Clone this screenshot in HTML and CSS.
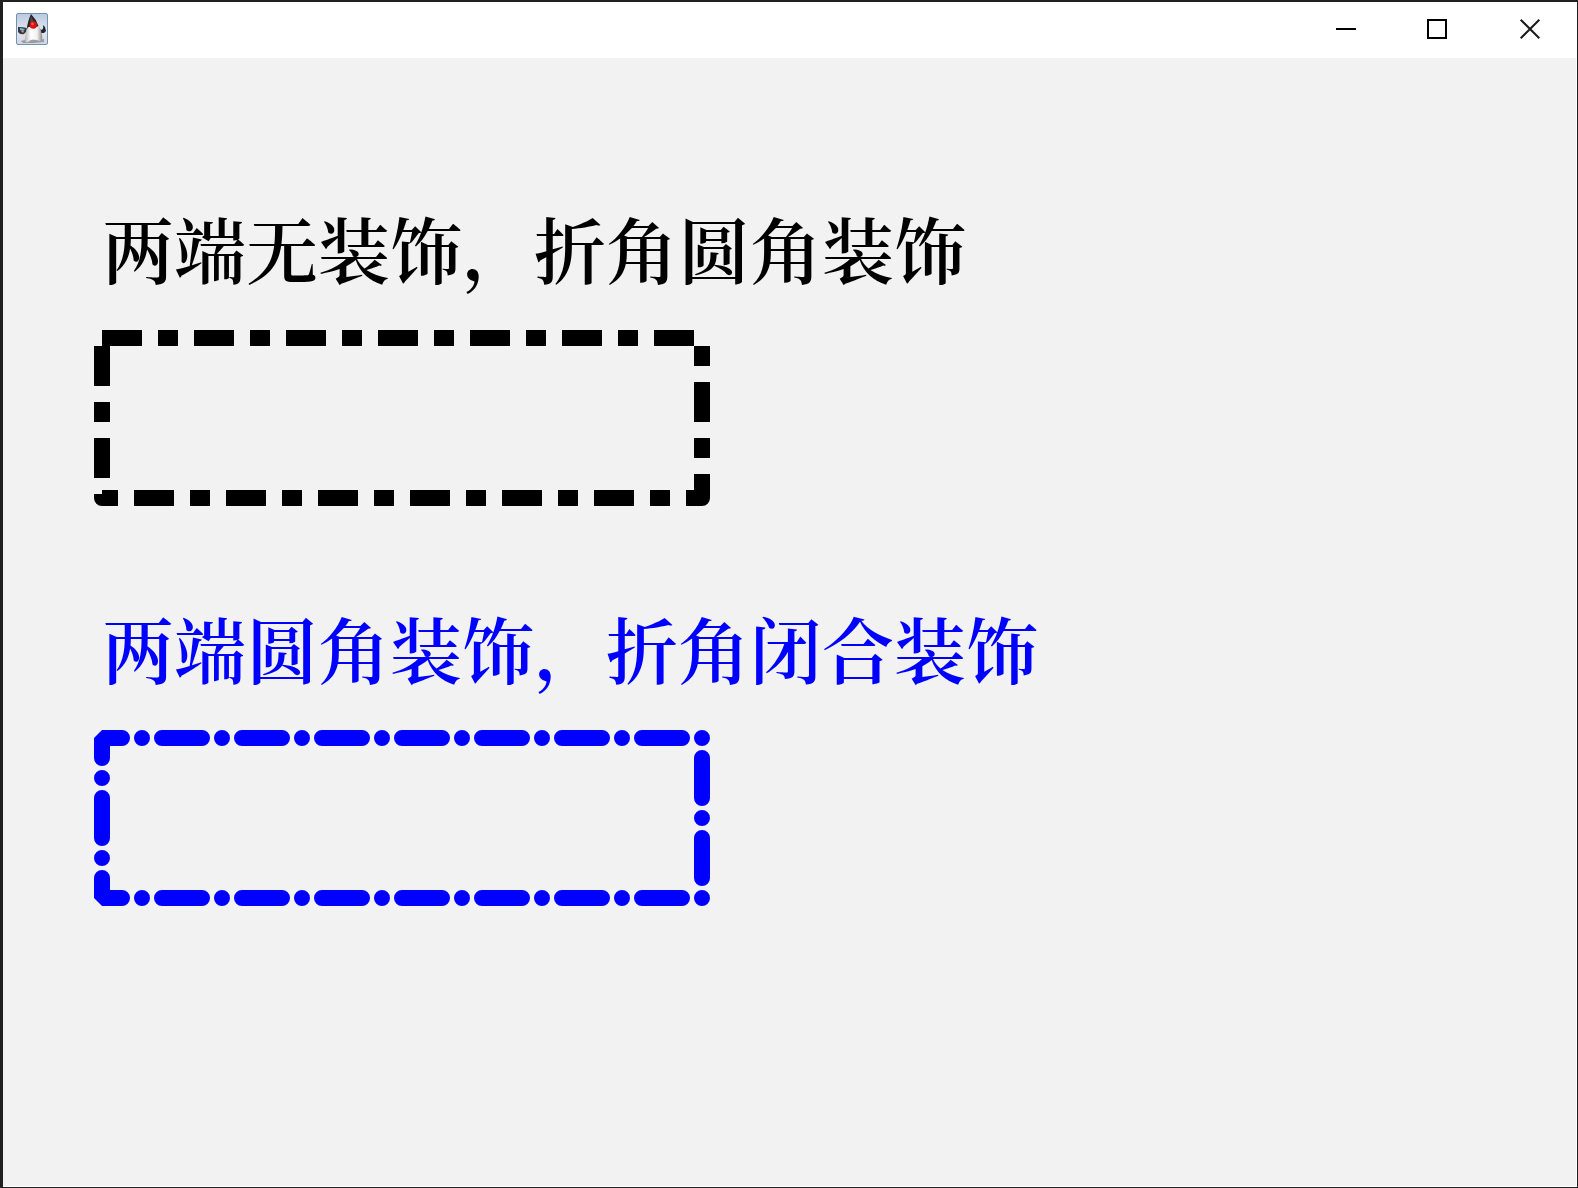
FILE: index.html
```html
<!DOCTYPE html>
<html lang="zh-CN">
<head>
<meta charset="utf-8">
<title>Stroke</title>
<link rel="stylesheet" href="styles.css">
</head>
<body>
<div class="window">
  <header class="titlebar">
    <svg class="app-icon" viewBox="0 0 32 32" aria-hidden="true">
      <defs>
        <linearGradient id="tile" x1="0" y1="0" x2="0" y2="1">
          <stop offset="0" stop-color="#b9c9dd"/>
          <stop offset=".55" stop-color="#e3e6ee"/>
          <stop offset="1" stop-color="#d3d6df"/>
        </linearGradient>
        <linearGradient id="belly" x1="0" y1="0" x2="1" y2="0">
          <stop offset="0" stop-color="#b5b5b5"/>
          <stop offset=".35" stop-color="#ffffff"/>
          <stop offset=".7" stop-color="#f2f2f2"/>
          <stop offset="1" stop-color="#8c8c8c"/>
        </linearGradient>
      </defs>
      <rect x=".5" y=".5" width="31" height="31" rx="1.5" fill="url(#tile)" stroke="#6f94b0"/>
      <path d="M5 28Q12 25 19 27L28 26V29L18 30H7Z" fill="#6f737b" opacity=".6"/>
      <path d="M11 15Q7 14 2 14V19Q4 22 8 21L11 18Z" fill="#35383d"/>
      <path d="M4 15L9 16L7 18L4 17Z" fill="#77b6ec"/>
      <path d="M5 18L8 18L7 20Z" fill="#d79a57"/>
      <path d="M24 16L26 17Q28 15 27 12L29 14L30 18L28 20L25 20Z" fill="#202225"/>
      <path d="M11 13L23 13Q27 21 26 27Q24 29 21 27Q16 25 12 29Q8 30 9 25Z" fill="url(#belly)"/>
      <path d="M15 1Q20 6 22.500 13Q18 16 14 14Q12 13 10.500 17Q12 7 15 1Z" fill="#242424"/>
      <path d="M15 3Q17 7 18 9L14 11Q14 6 15 3Z" fill="#484848"/>
      <circle cx="17.3" cy="12" r="3.7" fill="#dc1111"/>
      <circle cx="16.5" cy="11" r="1.4" fill="#ff5448"/>
    </svg>
    <div class="controls">
      <button class="control" type="button" aria-label="最小化">
        <svg class="glyph" viewBox="0 0 20 20"><path d="M0 10H20"/></svg>
      </button>
      <button class="control" type="button" aria-label="最大化">
        <svg class="glyph" viewBox="0 0 20 20"><path d="M0 1H18V19H0Z"/></svg>
      </button>
      <button class="control" type="button" aria-label="关闭">
        <svg class="glyph glyph-close" viewBox="0 0 20 20"><path d="M.7 .7L19.3 19.3M19.3 .7L.7 19.3"/></svg>
      </button>
    </div>
  </header>
  <main class="canvas">
    <section class="sample sample-butt">
      <h2 class="caption">两端无装饰，折角圆角装饰</h2>
      <svg class="figure" viewBox="0 0 616 176" aria-hidden="true">
        <path class="outline outline-butt" d="M8 8H608V168H8Z"/>
      </svg>
    </section>
    <section class="sample sample-round">
      <h2 class="caption">两端圆角装饰，折角闭合装饰</h2>
      <svg class="figure" viewBox="0 0 616 176" aria-hidden="true">
        <path class="outline outline-round" d="M48 8H608V168H8V8H48"/>
      </svg>
    </section>
  </main>
</div>
</body>
</html>
```
FILE: styles.css
```css
* {
  box-sizing: border-box;
}

body {
  margin: 0;
  background: #202020;
}

.window {
  display: flex;
  flex-direction: column;
  min-height: 100vh;
  border: solid #202020;
  border-width: 2px 1px 1px 3px;
  background: #fff;
}

.titlebar {
  display: flex;
  align-items: center;
  justify-content: space-between;
  height: 56px;
  padding: 0 1px 2px 13px;
}

.app-icon {
  width: 32px;
  height: 32px;
}

.controls {
  display: flex;
  align-self: stretch;
}

.control {
  display: flex;
  align-items: center;
  justify-content: center;
  width: 92px;
  padding: 0;
  border: 0;
  background: transparent;
}

.glyph {
  width: 20px;
  height: 20px;
  overflow: visible;
  fill: none;
  stroke: #000;
  stroke-width: 2;
  shape-rendering: crispEdges;
}

.glyph-close {
  stroke: #1a1a1a;
  shape-rendering: auto;
}

.canvas {
  flex: 1;
  display: flex;
  flex-direction: column;
  gap: 93px;
  margin: 0 1px 1px 0;
  padding: 141px 24px 24px 91px;
  background: #f2f2f2;
}

.sample {
  display: flex;
  flex-direction: column;
  gap: 35px;
}

.sample-butt {
  color: #000;
}

.sample-round {
  color: #00f;
}

.caption {
  margin: 0;
  padding-left: 8px;
  font: 600 72px/96px "Noto Serif CJK SC", "Source Han Serif SC", SimSun, "Noto Sans CJK SC", serif;
}

.figure {
  width: 616px;
  height: 176px;
  max-width: 100%;
}

.outline {
  fill: none;
  stroke: currentColor;
  stroke-width: 16;
}

.outline-butt {
  stroke-linejoin: round;
  stroke-dasharray: 40 16 20 16;
}

.outline-round {
  stroke-linecap: round;
  stroke-linejoin: bevel;
  stroke-dasharray: 0 20 40 20;
}
```
